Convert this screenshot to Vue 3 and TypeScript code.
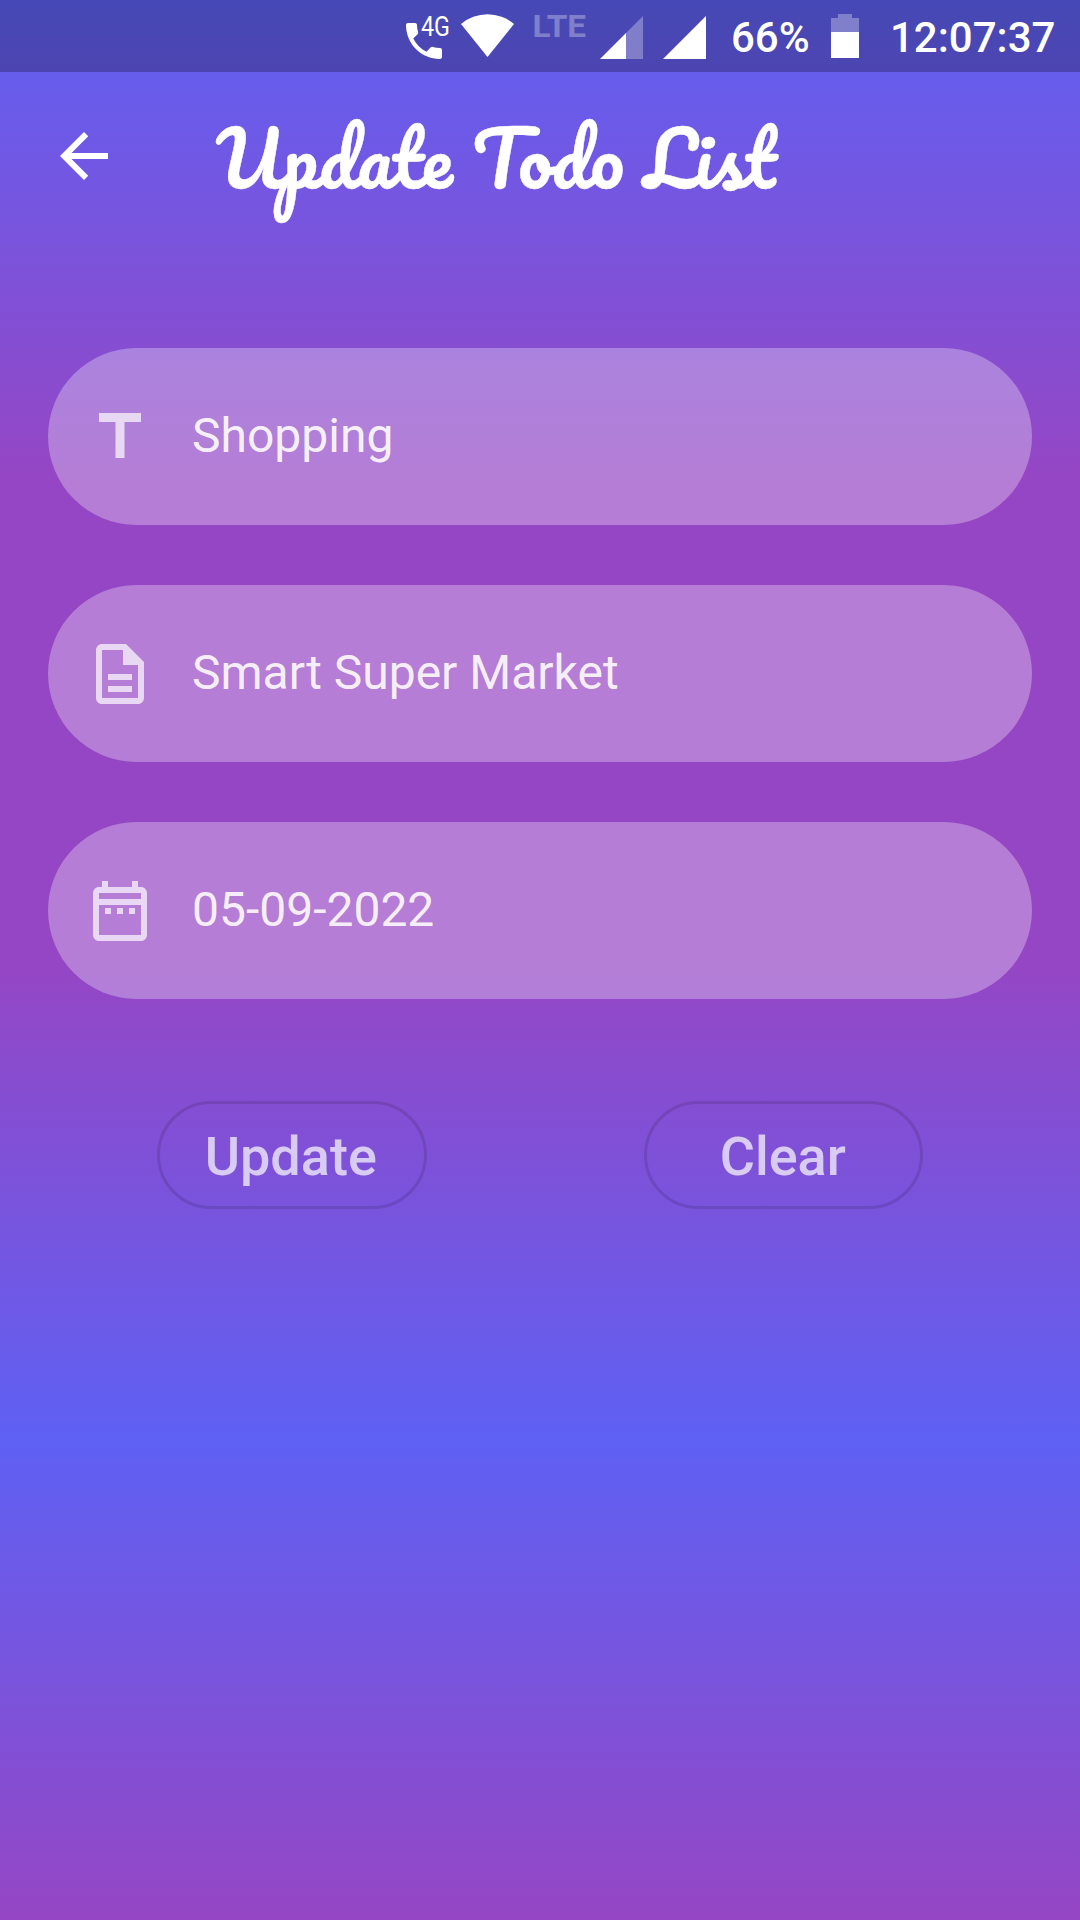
<script setup lang="ts">
import { ref } from 'vue'

interface Field {
  id: string
  value: string
  icon: string
}

const initial: Field[] = [
  { id: 'title', value: 'Shopping', icon: 'M5 4v3h5.5v12h3V7H19V4z' },
  {
    id: 'description',
    value: 'Smart Super Market',
    icon: 'M8 16h8v2H8zm0-4h8v2H8zm6-10H6c-1.1 0-2 .9-2 2v16c0 1.1.89 2 1.99 2H18c1.1 0 2-.9 2-2V8l-6-6zm4 18H6V4h7v5h5v11z',
  },
  {
    id: 'date',
    value: '05-09-2022',
    icon: 'M7 11h2v2H7zm14-5v14c0 1.1-.9 2-2 2H5c-1.11 0-2-.9-2-2l.01-14c0-1.1.88-2 1.99-2h1V2h2v2h8V2h2v2h1c1.1 0 2 .9 2 2zM5 8h14V6H5zm14 12V10H5v10zm-4-7h2v-2h-2zm-4 0h2v-2h-2z',
  },
]
const fields = ref<Field[]>(initial)
</script>

<template>
  <div class="screen">
    <div class="status">
      <svg class="signals" width="340" height="72" viewBox="390 0 340 72" fill="#fff">
        <path
          transform="translate(400 17) scale(2)"
          d="M6.62 10.79c1.44 2.83 3.76 5.14 6.59 6.59l2.2-2.2c.27-.27.67-.36 1.02-.24 1.12.37 2.33.57 3.57.57.55 0 1 .45 1 1V20c0 .55-.45 1-1 1-9.39 0-17-7.61-17-17 0-.55.45-1 1-1h3.5c.55 0 1 .45 1 1 0 1.25.2 2.45.57 3.57.11.35.03.74-.25 1.02l-2.2 2.2z"
        />
        <text x="421" y="36" font-size="27" textLength="29" lengthAdjust="spacingAndGlyphs">4G</text>
        <path d="M461 24A41 41 0 0 1 514 24L487.5 57z" />
        <text class="lte" x="532.5" y="37" font-size="32" textLength="53.5" lengthAdjust="spacingAndGlyphs">LTE</text>
        <path d="M626 33L643 16V59H626z" opacity=".3" />
        <path d="M600 59L626 33V59z" />
        <path d="M663 59L706 16V59z" />
      </svg>
      <span class="percent">66%</span>
      <svg class="battery" width="28" height="44" viewBox="0 0 28 44" fill="#fff">
        <path d="M7 0h14v4h7v14H0V4h7z" opacity=".3" />
        <path d="M0 18h28v26H0z" />
      </svg>
      <span class="clock">12:07:37</span>
    </div>

    <header class="bar">
      <svg class="back" width="72" height="72" viewBox="0 0 24 24" fill="#fff">
        <path d="M20 11H7.83l5.59-5.59L12 4l-8 8 8 8 1.41-1.41L7.83 13H20z" />
      </svg>
      <h1 class="heading">Update Todo List</h1>
    </header>

    <main class="form">
      <div v-for="field in fields" :key="field.id" class="field">
        <svg width="72" height="72" viewBox="0 0 24 24"><path :d="field.icon" /></svg>
        <span class="value">{{ field.value }}</span>
      </div>
      <div class="actions">
        <button class="update">Update</button>
        <button class="clear">Clear</button>
      </div>
    </main>
  </div>
</template>

<style>
body {
  margin: 0;
}
</style>

<style scoped>
.screen {
  box-sizing: border-box;
  width: 1080px;
  height: 1920px;
  overflow: hidden;
  display: flex;
  flex-direction: column;
  font-family: Roboto, "Noto Sans", sans-serif;
  color: #fff;
  background: linear-gradient(#5e61f4, #9546c4 25%, #9546c4 50%, #5e61f4 75%, #9546c4);
}
.status {
  display: flex;
  align-items: flex-start;
  flex: none;
  height: 72px;
  padding-left: 390px;
  background: rgba(0, 0, 0, 0.25);
  font-size: 42px;
  font-weight: 500;
  line-height: 76px;
  white-space: nowrap;
}
.signals,
.battery,
.back {
  flex: none;
  display: block;
}
.signals text {
  font-weight: 400;
}
.signals .lte {
  font-weight: 700;
  opacity: 0.3;
}
.percent {
  width: 100px;
  margin-left: 1px;
}
.battery {
  margin-top: 14px;
}
.clock {
  margin-left: 31px;
}
.bar {
  display: flex;
  align-items: center;
  flex: none;
  height: 168px;
  padding-left: 48px;
}
.heading {
  margin: 0 0 0 96px;
  padding-top: 2px;
  font-family: Pacifico, cursive;
  font-size: 75px;
  font-weight: 400;
  line-height: 132px;
  white-space: nowrap;
  -webkit-text-stroke: 0.4px #fff;
}
.form {
  display: flex;
  flex-direction: column;
  gap: 60px;
  padding: 108px 48px 0;
}
.field {
  display: flex;
  align-items: center;
  box-sizing: border-box;
  height: 177px;
  padding-left: 36px;
  gap: 36px;
  border-radius: 88.5px;
  background: rgba(255, 255, 255, 0.3);
}
.field svg {
  flex: none;
  fill: rgba(255, 255, 255, 0.7);
}
.value {
  padding-bottom: 2px;
  font-size: 48px;
  line-height: 56px;
  color: rgba(255, 255, 255, 0.9);
}
.actions {
  display: flex;
  justify-content: space-around;
  padding-top: 42px;
}
button {
  box-sizing: border-box;
  height: 108px;
  padding: 3px 2px 0 0;
  border: 3px solid rgba(0, 0, 0, 0.12);
  border-radius: 54px;
  background: none;
  font: 500 54px/64px Roboto, "Noto Sans", sans-serif;
  color: rgba(255, 255, 255, 0.7);
}
.update {
  width: 270px;
}
.clear {
  width: 279px;
}
</style>
